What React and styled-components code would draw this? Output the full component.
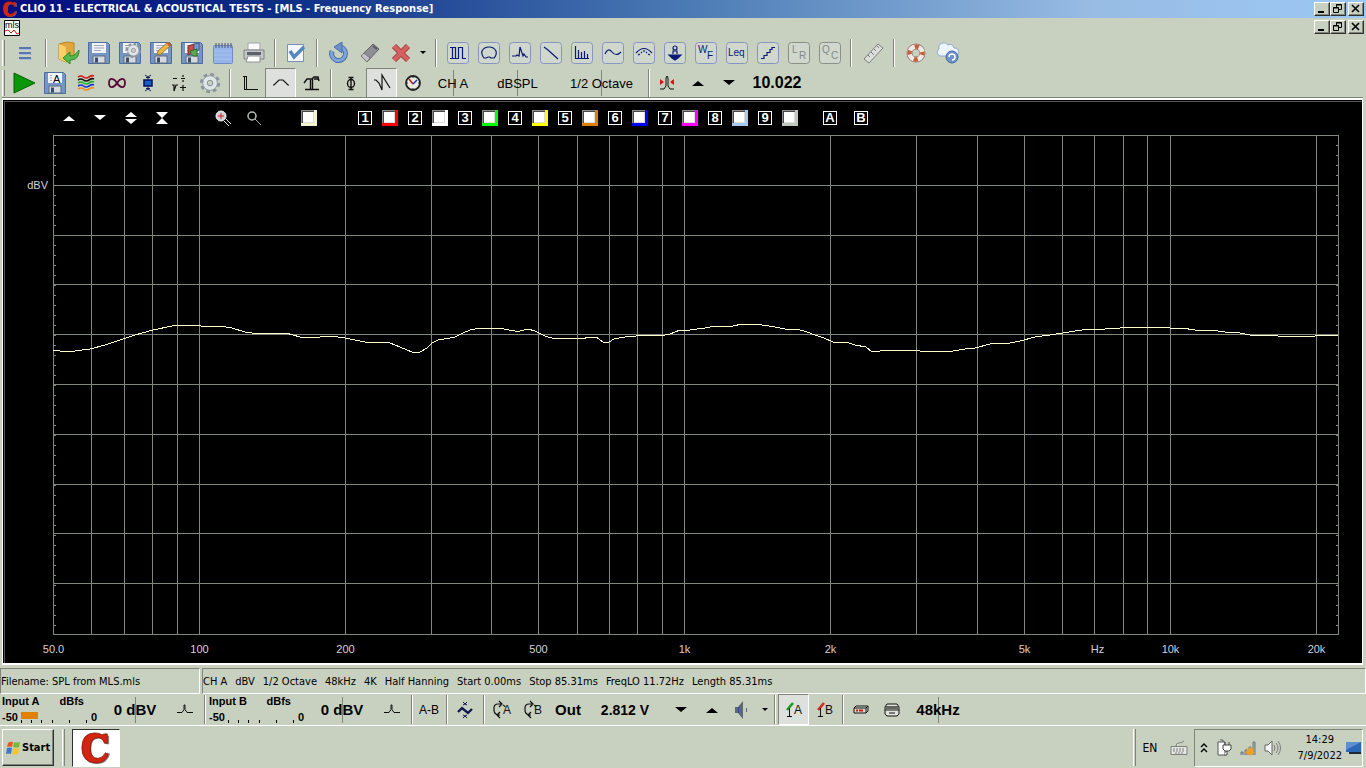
import React from "react";
import styled, { createGlobalStyle, css } from "styled-components";

const face = "#c8d1c0";
const shade = "#80857c";
const navy = "#0a1a78";

const GlobalStyle = createGlobalStyle`
  * {
    box-sizing: border-box;
  }
  body {
    margin: 0;
    background: ${face};
    color: #000;
    font-family: "DejaVu Sans Condensed", "Noto Sans", sans-serif;
    font-size: 11px;
  }
  button {
    font: inherit;
    color: inherit;
    padding: 0;
    margin: 0;
    border: 0;
    background: transparent;
  }
  svg {
    display: block;
    flex: none;
  }
`;

const Window = styled.div`
  display: flex;
  flex-direction: column;
  min-height: 100vh;
`;

const TitleBar = styled.header`
  display: flex;
  align-items: center;
  height: 18px;
  padding: 0 2px;
  background: linear-gradient(90deg, #020c80 0%, #0c2c86 20%, #4a7ab4 50%, #98bce4 80%, #9cc8f4 100%);
`;

const Title = styled.h1`
  flex: 1;
  margin: 0 0 0 2px;
  font-size: 11px;
  line-height: 18px;
  font-weight: 700;
  color: #fff;
  white-space: nowrap;
`;

const MenuBar = styled.div`
  display: flex;
  align-items: flex-start;
  justify-content: space-between;
  height: 20px;
  padding: 2px 2px 0 4px;
`;

const WindowButtons = styled.div`
  display: flex;
  button:last-child {
    margin-left: 2px;
  }
`;

const raised = css`
  border: 1px solid;
  border-color: #fff #303030 #303030 #fff;
  box-shadow: inset -1px -1px 0 ${shade};
`;

const WindowButton = styled.button`
  ${raised}
  width: 16px;
  height: 14px;
  background: ${face};
  display: flex;
  align-items: center;
  justify-content: center;
`;

const Toolbar = styled.div`
  display: flex;
  align-items: stretch;
  height: 30px;
`;

const Grip = styled.span`
  width: ${props => props.$width || 8}px;
  margin: 2px 0;
  background: linear-gradient(90deg, #fff 1px, ${face} 1px 2px, ${shade} 2px 3px, transparent 3px) 2px 0 no-repeat;
`;

const Separator = styled.span`
  width: ${props => props.$width || 12}px;
  margin: 1px 0;
  background: linear-gradient(90deg, ${shade} 1px, #fff 1px 2px) center / 2px 100% no-repeat;
`;

const ToolButton = styled.button`
  width: ${props => props.$width || 31}px;
  display: flex;
  align-items: center;
  justify-content: center;
  ${props =>
    props.$pressed &&
    css`
      border: 1px solid;
      border-color: ${shade} #fff #fff ${shade};
      background: #dde0dc;
    `}
`;

const ValueButton = styled(ToolButton)`
  font-family: "Liberation Sans", sans-serif;
  font-size: ${props => props.$size || 13}px;
  font-weight: ${props => (props.$bold ? 700 : 400)};
  white-space: nowrap;
  ${props =>
    props.$divided &&
    css`
      background: linear-gradient(${shade}, ${shade}) center / 1px 26px no-repeat;
    `}
`;

const Frame = styled.main`
  flex: 1;
  display: flex;
  flex-direction: column;
  margin: 0 3px 0 2px;
  border: solid;
  border-width: 2px 1px 2px 1px;
  border-color: #fff;
  background: #000;
  box-shadow: inset 1px 1px 0 #000, inset 2px 2px 0 #555, 0 -1px 0 ${shade};
`;

const ChartTools = styled.div`
  display: flex;
  align-items: center;
  height: 35px;
  padding-left: 50px;
`;

const ChartButton = styled.button`
  width: 31px;
  height: 20px;
  color: #fff;
  display: flex;
  align-items: center;
  justify-content: center;
`;

const ZoomTools = styled.div`
  display: flex;
  margin: 0 32px 0 30px;
`;

const BoxButton = styled.button`
  width: 14px;
  height: 14px;
  border: 1px solid #fff;
  color: #fff;
  font: 700 13px/12px "Liberation Sans", sans-serif;
  text-align: center;
`;

const CurveCheck = styled.input`
  appearance: none;
  width: 16px;
  height: 16px;
  margin: 0;
  border: solid ${props => props.$color};
  border-width: 0 3px 3px 0;
  background: #fff;
  box-shadow: inset 1px 1px 0 #8c8c8c, inset 2px 2px 0 #484848, inset -1px -1px 0 #dcdcd8;
`;

const Traces = styled.div`
  display: flex;
  margin-left: 41px;
`;

const Trace = styled.div`
  display: flex;
  align-items: center;
  width: 50px;
  gap: 10px;
`;

const Overlays = styled.div`
  display: flex;
  gap: 17px;
  margin-left: 15px;
`;

const PlotArea = styled.div`
  flex: 1;
  display: grid;
  grid-template-columns: 50px 1fr 23px;
  grid-template-rows: 1fr 28px;
`;

const YAxis = styled.div`
  display: flex;
  flex-direction: column;
  padding-right: 5px;
  color: #d8d0d8;
  font: 11px/14px "Liberation Sans", sans-serif;
  text-align: right;
  &::before {
    content: "";
    flex: 0 0 calc(10% - 7px);
  }
`;

const Plot = styled.svg`
  width: 100%;
  height: 100%;
  min-height: 0;
`;

const PlotCell = styled.div`
  display: grid;
  min-height: 0;
  height: 100%;
`;

const XAxis = styled.svg`
  grid-column: 2;
  width: 100%;
  height: 28px;
  overflow: visible;
  fill: #d8d0d8;
  font: 11px "Liberation Sans", sans-serif;
  text-anchor: middle;
`;

const StatusBar = styled.div`
  display: flex;
  gap: 2px;
  height: 26px;
  margin-top: 3px;
`;

const StatusPanel = styled.div`
  display: flex;
  align-items: center;
  gap: 8px;
  width: ${props => props.$width || "auto"};
  flex: ${props => (props.$width ? "none" : 1)};
  border: 1px solid;
  border-color: ${shade} #fff #fff ${shade};
  white-space: nowrap;
`;

const MeterBar = styled.div`
  display: flex;
  height: 32px;
  border-bottom: 1px solid #fff;
`;

const Meter = styled.div`
  display: flex;
  width: 202px;
`;

const MeterInfo = styled.div`
  width: 102px;
  padding-left: 2px;
  font: 700 11px/14px "Liberation Sans", sans-serif;
`;

const MeterHead = styled.div`
  display: flex;
  justify-content: space-between;
  width: 82px;
`;

const MeterScale = styled.div`
  display: flex;
  align-items: center;
  gap: 2px;
  height: 18px;
`;

const Taskbar = styled.footer`
  display: flex;
  align-items: center;
  height: 42px;
  padding: 0 3px 0 2px;
  border-top: 1px solid ${face};
`;

const StartButton = styled.button`
  ${raised}
  display: flex;
  align-items: center;
  gap: 1px;
  width: 52px;
  height: 37px;
  padding-left: 2px;
  font-weight: 700;
`;

const TaskGrip = styled(Grip)`
  align-self: stretch;
  margin-left: ${props => props.$left};
`;

const TaskButton = styled.button`
  width: 48px;
  height: 38px;
  margin-left: 4px;
  border: 1px solid;
  border-color: #303030 #fff #fff #303030;
  background: #fff;
  display: flex;
  align-items: center;
  justify-content: center;
`;

const Language = styled.button`
  width: 22px;
  margin-right: 9px;
  font-size: 12px;
`;

const Tray = styled.div`
  display: flex;
  align-items: center;
  gap: 8px;
  width: 169px;
  height: 38px;
  margin-left: 6px;
  padding-left: 5px;
  border: 1px solid;
  border-color: ${shade} #fff #fff ${shade};
`;

const Clock = styled.time`
  flex: 1;
  line-height: 16px;
  text-align: right;
  margin-right: -4px;
  span {
    display: block;
    padding-right: 8px;
  }
`;

/* ---------- icons ---------- */

const Svg = ({ w = 20, h = 20, children, ...rest }) => (
  <svg width={w} height={h} viewBox={`0 0 ${w} ${h}`} fill="none" aria-hidden="true" {...rest}>
    {children}
  </svg>
);

const Tile = ({ d, muted, children }) => (
  <Svg w={22} h={22} stroke={muted ? "#85898a" : navy} strokeWidth="1.2">
    <rect x="0.5" y="0.5" width="21" height="21" rx="3" stroke={muted ? "#8a8f88" : "#8795c0"} strokeWidth="1" fill="#d0d7cc" />
    {d && <path d={d} />}
    {children}
  </Svg>
);

const tileText = {
  stroke: "none",
  fontFamily: "Liberation Sans",
  fontSize: 10
};

const Floppy = ({ children }) => (
  <Svg w={24} h={24}>
    <path d="M1.5 1.5h19l2 2v19h-21z" fill="#7595c4" stroke="#4d6c9d" />
    <path d="M5 2h14v10H5z" fill="#f0f2f6" />
    <path d="M7 4.5h10M7 7h10M7 9.5h7" stroke="#a0a6b4" />
    <path d="M6 15h12v7H6z" fill="#d6dade" stroke="#5a6a84" />
    <path d="M8 16.5h3v5H8z" fill="#3b4c66" />
    {children}
  </Svg>
);

const MenuIcon = () => (
  <Svg w={16} h={16} stroke="#5878ac" strokeWidth="2">
    <path d="M2 3h12M2 8h12M2 13h12" />
    <path d="M3 4.5h12M3 9.5h12M3 14.5h12" stroke="#a6bcdc" strokeWidth="1" />
  </Svg>
);

const OpenIcon = () => (
  <Svg w={24} h={24}>
    <path d="M3 3l8-2 7 1v15l-8 4-7-3z" fill="#e0a83c" stroke="#b88424" />
    <path d="M3 3l7 3v15l-7-3z" fill="#f7d06a" />
    <path d="M23 9c0 7-3 10-9 10v4l-7-6 7-6v4c4 0 6-2 9-6z" fill="#55b848" stroke="#2c8a28" />
  </Svg>
);

const Gear = ({ x = 0, y = 0, s = 1 }) => (
  <g transform={`translate(${x} ${y}) scale(${s})`}>
    <circle cx="12" cy="12" r="9.5" stroke="#8a949c" strokeWidth="3" strokeDasharray="4 3.46" />
    <circle cx="12" cy="12" r="8" fill="#e0e5e8" stroke="#8a939b" />
    <circle cx="12" cy="12" r="3" fill={face} stroke="#7e8790" />
  </g>
);

const NotebookIcon = () => (
  <Svg w={22} h={22}>
    <rect x="1.5" y="3.5" width="19" height="18" rx="1" fill="#96b4ea" stroke="#6e8cc4" />
    <path d="M2 9h18M2 13h18M2 17h18" stroke="#a8c2f0" />
    <path d="M4 1v5M7 1v5M10 1v5M13 1v5M16 1v5M19 1v5" stroke="#4a5470" />
  </Svg>
);

const PrinterIcon = () => (
  <Svg w={22} h={22}>
    <path d="M5 1h12v7H5z" fill="#fafafa" stroke="#a0a4a8" />
    <path d="M1 8h20v9H1z" fill="#c4c8cc" stroke="#7c8288" />
    <path d="M4 10h14v3H4z" fill="#5c6268" />
    <path d="M5 14h12v6H3z" fill="#fff" stroke="#8c9094" />
  </Svg>
);

const CheckIcon = () => (
  <Svg w={22} h={22}>
    <path d="M2.5 2.5h16v17h-16z" fill="#f4f6fa" stroke="#7890b8" />
    <path d="M5 9l4 6 10-10" stroke="#5687bd" strokeWidth="3.5" />
  </Svg>
);

const UndoIcon = () => (
  <Svg w={22} h={22}>
    <path d="M4 9a7 7 0 1 0 9-4" stroke="#4870a8" strokeWidth="5" />
    <path d="M4 9a7 7 0 1 0 9-4" stroke="#7fa4d6" strokeWidth="3" />
    <path d="M14 0v11L6 5z" fill="#6b92c8" stroke="#4870a8" />
  </Svg>
);

const EraserIcon = () => (
  <Svg w={22} h={22}>
    <path d="M2 14L14 2l6 5L8 20z" fill="#8e8e98" stroke="#62626c" />
    <path d="M2 14l3-3 6 5-3 4z" fill="#c4c0c8" stroke="#72727c" />
    <path d="M14 4l4 3" stroke="#5c5c66" strokeWidth="2" />
  </Svg>
);

const DeleteIcon = () => (
  <Svg w={20} h={20}>
    <path d="M3 3l14 14M17 3L3 17" stroke="#a83c3c" strokeWidth="6" />
    <path d="M3 3l14 14M17 3L3 17" stroke="#d46060" strokeWidth="4" />
  </Svg>
);

const Triangle = ({ up, small }) => (
  <Svg w={12} h={6}>
    <path d={small ? "M3 1h6L6 4z" : up ? "M0 6h12L6 1z" : "M0 0h12L6 5z"} fill="currentColor" />
  </Svg>
);

const RulerIcon = () => (
  <Svg w={22} h={22}>
    <path d="M2 17L16 2l5 4L7 21z" fill="#dcdfdc" stroke="#7b7f7c" />
    <path d="M6 13l2 2M9 10l3 3M12 7l2 2M15 4l2 2" stroke="#7b7f7c" />
  </Svg>
);

const HelpIcon = () => (
  <Svg w={20} h={20}>
    <circle cx="10" cy="10" r="6.5" stroke="#8c7870" strokeWidth="6" />
    <circle cx="10" cy="10" r="6.5" stroke="#eeeae6" strokeWidth="4.5" />
    <circle cx="10" cy="10" r="6.5" stroke="#c5603c" strokeWidth="4.5" strokeDasharray="4.2 6" strokeDashoffset="2.1" />
  </Svg>
);

const CloudIcon = () => (
  <Svg w={24} h={22}>
    <path d="M5 14a4 4 0 0 1-1-7 5 5 0 0 1 9-4 4 4 0 0 1 6 3 4 4 0 0 1 1 8z" fill="#eef4fc" stroke="#90aad0" />
    <circle cx="17" cy="15" r="6" fill="#6c94ca" stroke="#4468a0" />
    <path d="M14 15a3 3 0 1 1 3 3" stroke="#fff" strokeWidth="1.5" />
  </Svg>
);

const WavesIcon = () => (
  <Svg w={18} h={20} strokeWidth="1.6">
    {["#d01818", "#101010", "#20b020", "#1830e0", "#f0901c"].map((color, i) => (
      <path key={color} d={`M1 ${4 + i * 3}q3-2 5.5 0t5.5 0t5-1`} stroke={color} />
    ))}
  </Svg>
);

const InfinityIcon = () => (
  <Svg w={20} h={20} stroke="#5a0838" strokeWidth="1.8">
    <path d="M10 10C7 5 2 4 2 10s5 5 8 0 8-6 8 0-5 5-8 0z" />
  </Svg>
);

const CenterIcon = () => (
  <Svg w={12} h={20}>
    <path d="M2 7h8v6H2z" fill="#1460c4" stroke="#001060" strokeWidth="1.5" />
    <path d="M3 2l3 2 3-2M4 4.5h4M6 4v3M6 13v3M4 15.5h4M3 18l3-2 3 2" stroke="#102060" />
  </Svg>
);

const MathIcon = () => (
  <Svg w={16} h={18} stroke="#101010" strokeWidth="1.2">
    <path d="M2 4.5h4M10 4.5h4M12 1v2M12 6v2M1 11h2v6l2-6h2M9 13.5h6M12 11v6" />
  </Svg>
);

const StepIcon = () => (
  <Svg stroke="#101010">
    <path d="M3 3.5h3M4.5 3v14M6.5 3v13.5M4 16.5h14" />
  </Svg>
);

const BumpIcon = () => (
  <Svg stroke="#101010" strokeWidth="1.2">
    <path d="M2 12h1l5-5h4l5 5h1" />
  </Svg>
);

const TableIcon = () => (
  <Svg stroke="#101010" strokeWidth="1.4">
    <path d="M2 10l3-4h5l2-2h4l1 4M12 6h4M8.5 7v10M10.5 6v11M3 16.5h14" />
  </Svg>
);

const PhiIcon = () => (
  <Svg w={12} h={20} stroke="#101010" strokeWidth="1.4">
    <path d="M6 4v13M3.5 4.5h5M3.5 16.5h5" />
    <ellipse cx="6" cy="10.5" rx="3.5" ry="4" />
  </Svg>
);

const ImpulseIcon = () => (
  <Svg stroke="#101010" strokeWidth="1.2">
    <path d="M2 7h2l3 3 3 7V2l3 5 5 8" />
  </Svg>
);

const ClockIcon = () => (
  <Svg>
    <circle cx="10" cy="10" r="7" fill="#e8ece0" stroke="#222" strokeWidth="1.8" />
    <path d="M10 3v2M10 15v2M3 10h2M15 10h2M5 5l1 1M15 15l-1-1M5 15l1-1" stroke="#222" />
    <path d="M10 11l4-4" stroke="#1030c0" strokeWidth="1.5" />
    <path d="M10 11L6 6" stroke="#c01818" strokeWidth="1.5" />
  </Svg>
);

const CursorIcon = () => (
  <Svg w={18} h={18} stroke="#101010">
    <path d="M2 15h4l2-3V4l1-2 1 2v8l2 3h4" />
    <path d="M2 5v6l4-3zM16 5v6l-4-3z" fill="#e01010" stroke="none" />
  </Svg>
);

const PeakIcon = () => (
  <Svg w={16} h={14} stroke="#101010">
    <path d="M0 9.5h5l2-3V2h1v4.5l2 3h6" />
  </Svg>
);

const WaveIcon = () => (
  <Svg w={16} h={20} stroke="#101850">
    <path d="M1 12l4-4 6 5 4-4" strokeWidth="2.4" />
    <path d="M6 2l2 2 2-2M6 5l2-1 2 1M6 18l2-2 2 2M6 15l2 1 2-1" />
  </Svg>
);

const LoopIcon = ({ letter }) => (
  <Svg w={20} h={20}>
    <path d="M9 4H6Q2 4 2 8v2q0 4 4 5h2M7 1l3 3-3 3M8 12l-3 3 3 3M11 5q2 1 2 2" stroke="#101010" strokeWidth="1.2" />
    <text x="11" y="14" fill="#101010" fontFamily="Liberation Sans" fontSize="12">{letter}</text>
  </Svg>
);

const SpeakerIcon = () => (
  <Svg w={14} h={20}>
    <path d="M1 7h3l5-6v18l-5-6H1z" fill="#5c6876" />
    <path d="M4.5 7v6" stroke="#3048a0" />
    <path d="M12.5 8v4" stroke="#5c6876" />
  </Svg>
);

const MicIcon = ({ letter, color }) => (
  <Svg w={18} h={20}>
    <path d="M2 10l6-7" stroke={color} strokeWidth="2.6" />
    <path d="M4.5 8v9M2 16.5h5" stroke="#101010" />
    <text x="9" y="14" fill="#101010" fontFamily="Liberation Sans" fontSize="12">{letter}</text>
  </Svg>
);

const RackIcon = () => (
  <Svg w={16} h={12}>
    <path d="M1 4l2-2h12v5l-2 2H1z" fill="#d8dcd0" stroke="#101010" />
    <path d="M1 4h12v5M13 4l2-2" stroke="#101010" />
    <path d="M3 5.5h2v2H3zM6 5.5h4v2H6z" fill="#e01010" />
  </Svg>
);

const DiskIcon = () => (
  <Svg w={16} h={16}>
    <path d="M3 2h10l2 3v7l-2 2H3l-2-2V5z" fill="#e0e4dc" stroke="#101010" />
    <path d="M2 4h12v3H2z" fill="#60665c" />
    <path d="M1 8h14M5 11h6" stroke="#101010" />
  </Svg>
);

const Logo = ({ size }) => (
  <svg width={size} height={size} viewBox="0 0 34 34" fill="none" aria-hidden="true">
    <path d="M31 4v9h-3q-2-6-8-6-8 0-8 11t8 11q5 0 9-7l3 1q-3 11-14 11Q4 34 4 19 4 3 18 3q5 0 7 2l3-1z" fill="#888" />
    <path d="M29 2v10h-3q-2-6-7-6-8 0-8 11t8 11q5 0 8-6l3 2q-3 9-13 9Q2 32 2 17 2 1 16 1q5 0 7 2l3-1z" fill="#d42410" stroke="#7a1408" strokeWidth="0.8" />
  </svg>
);

const MlsIcon = () => (
  <Svg w={16} h={16}>
    <path d="M.5.5h15v15H.5z" fill="#fff" stroke="#000" />
    <text x="1" y="8" fill="#000" fontFamily="Liberation Sans" fontSize="9">mls</text>
    <path d="M1 11l3-1 3 3 3-3 3 4 2-1" stroke="#e01010" />
  </Svg>
);

const WindowsFlag = () => (
  <Svg w={16} h={16}>
    <path d="M3 3q2-2 5-1L7 7q-3-1-5 0z" fill="#e05a28" />
    <path d="M9 2q3 1 6 0l-1 5q-3 1-6 0z" fill="#78b83c" />
    <path d="M2 8q2-1 5 0l-1 6q-3-1-5 0z" fill="#3c78d0" />
    <path d="M8 8q3 1 6 0l-1 6q-3 1-6 0z" fill="#f4c430" />
  </Svg>
);

/* ---------- data ---------- */

const fileTools = [
  ["Open", <OpenIcon />],
  ["Save", <Floppy />],
  ["Save settings", <Floppy><Gear x={7} y={1} s={0.7} /></Floppy>],
  ["Save and edit", <Floppy><path d="M8 14l1-4L19 1l3 3-10 9z" fill="#e8b848" stroke="#a07828" /><path d="M19 1l3 3-2 1-2-2z" fill="#d05040" /></Floppy>],
  ["Export graphics", <Floppy><path d="M8 5l6-2v8l-6 3z" fill="#c84c40" stroke="#803028" /><path d="M14 3l5-1v7l-5 3z" fill="#7898c8" stroke="#405888" /><path d="M10 10l7-2v7q-6 1-7-5z" fill="#5ca850" stroke="#386830" /></Floppy>],
  ["Notes", <NotebookIcon />],
  ["Print", <PrinterIcon />]
];

const tests = [
  ["MLS", <Tile d="M3 5.5h5M5.5 5v11.5M8.5 5v11.5H3M11.5 16.5V5.5h4v11H19M8 16.5h4" />],
  ["Polar", <Tile d="M8 16h-2q-3-4-2-7 2-4 7-4t7 4q1 4-2 7h-3q-2-2-5 0z" />],
  ["Sweep", <Tile d="M3 14h4l1-1 2 1 1-9 3 9 1-2 2 3h2" />],
  ["Decay", <Tile d="M4 5l4 3 10 9" />],
  ["FFT", <Tile d="M4.5 4v12.5H18M7.5 8v8M10.5 10v6M13.5 9v7M16.5 12v4" />],
  ["Scope", <Tile d="M3 12q3-7 7-2t9 0" />],
  ["Meter", <Tile d="M3 11q8-9 16 0M5 13l2-1M8 10l1 1M11 8v2M14 10l-1 1M17 13l-2-1" />],
  ["Thiele Small", <Tile><circle cx="11" cy="6" r="2" /><path d="M9 12V9h4v3" /><path d="M5 13h12l-3 3-3 2-3-2z" fill={navy} /></Tile>],
  ["Wow and flutter", <Tile><text x="3" y="11" fill={navy} {...tileText}>W</text><text x="12" y="17" fill={navy} {...tileText}>F</text></Tile>],
  ["Leq", <Tile><text x="2" y="14" fill={navy} {...tileText}>Leq</text></Tile>],
  ["Linearity", <Tile d="M4 16.5h3v-3h3v-3h3v-3h2v-2h3" />],
  ["Loudspeaker rub", <Tile muted><text x="4" y="11" fill="#85898a" {...tileText}>L</text><text x="11" y="17" fill="#85898a" {...tileText}>R</text></Tile>],
  ["Quality control", <Tile muted><text x="3" y="11" fill="#85898a" {...tileText}>Q</text><text x="12" y="17" fill="#85898a" {...tileText}>C</text></Tile>]
];

const traces = [
  "#ff0000",
  "#ffffff",
  "#00ff00",
  "#ffff00",
  "#e08000",
  "#0000ff",
  "#ff00ff",
  "#a6caf0",
  "#c0c8c0"
];

const statusItems = [
  "CH A",
  "dBV",
  "1/2 Octave",
  "48kHz",
  "4K",
  "Half Hanning",
  "Start 0.00ms",
  "Stop 85.31ms",
  "FreqLO 11.72Hz",
  "Length 85.31ms"
];

const PLOT_W = 1286;
const PLOT_H = 500;
const OCTAVE = 146.1;

const freqX = f => Math.floor(Math.log2(f / 50) * OCTAVE + 0.4) + 0.5;

const gridFreqs = [
  60, 70, 80, 90, 100, 200, 300, 400, 500, 600, 700, 800, 900, 1000, 2000,
  3000, 4000, 5000, 6000, 7000, 8000, 9000, 10000, 20000
];

const freqLabels = [
  [50, "50.0"],
  [100, "100"],
  [200, "200"],
  [500, "500"],
  [1000, "1k"],
  [2000, "2k"],
  [5000, "5k"],
  [7070, "Hz"],
  [10000, "10k"],
  [20000, "20k"]
];

// response curve, in plot units from the upper left corner
const response =
  "0,215 7,216 22,216 37,214 52,210 70,204 82,200 100,195 119,191 127,190 145,190 148,191 167,191 179,193 192,197 199,198 233,198 247,202 267,202 277,201 292,203 312,207 337,208 347,212 359,217 367,217 374,213 379,208 385,205 397,203 402,202 410,198 417,195 427,193 445,193 462,196 467,196 475,194 482,196 492,201 502,204 517,203 528,204 537,202 543,202 550,207 556,207 561,204 572,202 595,200 607,201 617,199 627,195 637,195 652,193 662,191 680,191 689,189 709,190 722,192 737,195 744,194 754,197 762,200 771,203 780,207 793,207 802,210 813,212 819,217 827,216 839,215 847,216 857,215 867,216 885,217 892,216 900,216 912,214 922,213 937,209 957,208 967,206 982,202 997,200 1010,198 1022,196 1037,194 1052,194 1067,193 1082,192 1107,192 1117,193 1129,193 1142,195 1157,195 1172,197 1187,198 1197,200 1225,201 1262,201 1269,200 1285,201";

const tickLevels = Array.from({ length: 49 }, (_, i) => (i + 1) * 10 + 0.5);

const Controls = () => (
  <WindowButtons>
    <WindowButton aria-label="Minimize">
      <Svg w={10} h={10}><path d="M1 8h6" stroke="#000" strokeWidth="2" /></Svg>
    </WindowButton>
    <WindowButton aria-label="Restore">
      <Svg w={10} h={10} stroke="#000">
        <path d="M3.5 3V.5h5v5H6M3 1h6M.5 3.5h5v5h-5zM0 4h6" />
      </Svg>
    </WindowButton>
    <WindowButton aria-label="Close">
      <Svg w={10} h={10}><path d="M1 1l7 7M8 1L1 8" stroke="#000" strokeWidth="1.6" /></Svg>
    </WindowButton>
  </WindowButtons>
);

const Chart = () => (
  <PlotArea>
    <YAxis>dBV</YAxis>
    <PlotCell>
      <Plot viewBox={`0 0 ${PLOT_W} ${PLOT_H}`} preserveAspectRatio="none" role="img" aria-label="Frequency response">
        <g stroke="#80887e" fill="none" shapeRendering="crispEdges">
          {gridFreqs.map(f => (
            <path key={f} d={`M${freqX(f)} 0V${PLOT_H}`} />
          ))}
          {[1, 2, 3, 4, 5, 6, 7, 8, 9].map(i => (
            <path key={i} d={`M0 ${Math.round(i * 49.8) + 0.5}H${PLOT_W}`} />
          ))}
          <rect x="0.5" y="0.5" width={PLOT_W - 1} height={PLOT_H - 1} />
          {tickLevels.map(y => (
            <path key={y} d={`M0 ${y}h3M${PLOT_W} ${y}h-3`} />
          ))}
        </g>
        <polyline points={response} fill="none" stroke="#ffffd0" shapeRendering="crispEdges" />
      </Plot>
    </PlotCell>
    <XAxis>
      {freqLabels.map(([f, text]) => (
        <text key={text} x={`${(freqX(f) / PLOT_W) * 100}%`} y="18">
          {text}
        </text>
      ))}
    </XAxis>
  </PlotArea>
);

const InputMeter = ({ name, level }) => (
  <Meter>
    <MeterInfo>
      <MeterHead>
        <span>Input {name}</span>
        <span>dBfs</span>
      </MeterHead>
      <MeterScale>
        <span>-50</span>
        <Svg w={69} h={12}>
          <rect x="1" y="1" width={level} height="7" fill="#e08000" />
          <path d="M1.5 9v3M11.5 9v3M21.5 9v3M32.5 9v3M49.5 9v3M66.5 9v3" stroke="#000" />
        </Svg>
        <span>0</span>
      </MeterScale>
    </MeterInfo>
    <ValueButton $width={66} $size={15} $bold $divided>0 dBV</ValueButton>
    <ToolButton $width={34} aria-label={`Input ${name} peak`}><PeakIcon /></ToolButton>
  </Meter>
);

const App = () => (
  <>
    <GlobalStyle />
    <Window>
      <TitleBar>
        <Logo size={16} />
        <Title>CLIO 11 - ELECTRICAL &amp; ACOUSTICAL TESTS - [MLS - Frequency Response]</Title>
        <Controls />
      </TitleBar>
      <MenuBar>
        <MlsIcon />
        <Controls />
      </MenuBar>

      <Toolbar>
        <Grip $width={10} />
        <ToolButton $width={30} aria-label="Menu"><MenuIcon /></ToolButton>
        <Separator />
        {fileTools.map(([name, icon]) => (
          <ToolButton key={name} aria-label={name}>{icon}</ToolButton>
        ))}
        <Separator $width={11} />
        <ToolButton aria-label="Options"><CheckIcon /></ToolButton>
        <Separator />
        <ToolButton aria-label="Undo"><UndoIcon /></ToolButton>
        <ToolButton aria-label="Erase"><EraserIcon /></ToolButton>
        <ToolButton aria-label="Delete"><DeleteIcon /></ToolButton>
        <ToolButton $width={14} aria-label="Delete options"><Triangle small /></ToolButton>
        <Separator />
        {tests.map(([name, icon]) => (
          <ToolButton key={name} aria-label={name}>{icon}</ToolButton>
        ))}
        <Separator />
        <ToolButton aria-label="Calibrate"><RulerIcon /></ToolButton>
        <Separator />
        <ToolButton aria-label="Help"><HelpIcon /></ToolButton>
        <ToolButton aria-label="Updates"><CloudIcon /></ToolButton>
      </Toolbar>

      <Toolbar>
        <Grip />
        <ToolButton aria-label="Go">
          <Svg w={24} h={24}><path d="M2 2l21 10L2 22z" fill="#089808" stroke="#056005" /></Svg>
        </ToolButton>
        <ToolButton aria-label="Autosave">
          <Floppy>
            <path d="M9 3h10v9H9z" fill="#f4f6f8" />
            <text x="10" y="12" fill="#000" fontFamily="Liberation Sans" fontSize="11">A</text>
          </Floppy>
        </ToolButton>
        <ToolButton aria-label="Overlays"><WavesIcon /></ToolButton>
        <ToolButton aria-label="Loop"><InfinityIcon /></ToolButton>
        <ToolButton aria-label="Center"><CenterIcon /></ToolButton>
        <ToolButton aria-label="Processing"><MathIcon /></ToolButton>
        <ToolButton aria-label="Settings"><Svg w={22} h={22}><Gear s={0.92} /></Svg></ToolButton>
        <Separator $width={9} />
        <ToolButton aria-label="Time domain"><StepIcon /></ToolButton>
        <ToolButton $pressed aria-label="Frequency domain"><BumpIcon /></ToolButton>
        <ToolButton aria-label="Energy time"><TableIcon /></ToolButton>
        <Separator $width={8} />
        <ToolButton aria-label="Phase"><PhiIcon /></ToolButton>
        <ToolButton $pressed aria-label="Wrapped phase"><ImpulseIcon /></ToolButton>
        <ToolButton aria-label="Group delay"><ClockIcon /></ToolButton>
        <ValueButton $width={50} $divided>CH A</ValueButton>
        <ValueButton $width={79} $divided>dBSPL</ValueButton>
        <ValueButton $width={89} $divided>1/2 Octave</ValueButton>
        <Separator $width={5} />
        <ToolButton aria-label="Marker"><CursorIcon /></ToolButton>
        <ToolButton aria-label="Up"><Triangle up /></ToolButton>
        <ToolButton aria-label="Down"><Triangle /></ToolButton>
        <ValueButton $width={66} $size={16} $bold>10.022</ValueButton>
      </Toolbar>

      <Frame>
        <ChartTools>
          <ChartButton aria-label="Shift up"><Triangle up /></ChartButton>
          <ChartButton aria-label="Shift down"><Triangle /></ChartButton>
          <ChartButton aria-label="Expand">
            <Svg w={12} h={14}><path d="M0 6h12L6 1zM0 8h12l-6 5z" fill="#fff" /></Svg>
          </ChartButton>
          <ChartButton aria-label="Compress">
            <Svg w={12} h={14}><path d="M0 1h12L6 7zM0 13h12L6 7z" fill="#fff" /></Svg>
          </ChartButton>
          <ZoomTools>
            <ChartButton aria-label="Zoom in">
              <Svg w={16} h={16}>
                <circle cx="6" cy="6" r="5" fill="#d0d0dc" stroke="#f4f4f4" />
                <path d="M6 3v6M3 6h6" stroke="#e01010" />
                <path d="M9 11l5 5M11 9l5 5" stroke="#e8e8e8" />
              </Svg>
            </ChartButton>
            <ChartButton aria-label="Zoom out">
              <Svg w={16} h={16}>
                <circle cx="6" cy="6" r="4" stroke="#b8c0b8" strokeWidth="1.5" />
                <path d="M9 9l6 6" stroke="#b0b0b0" />
              </Svg>
            </ChartButton>
          </ZoomTools>
          <CurveCheck type="checkbox" $color="#f4f4cc" aria-label="Current curve" />
          <Traces>
            {traces.map((color, i) => (
              <Trace key={color}>
                <BoxButton>{i + 1}</BoxButton>
                <CurveCheck type="checkbox" $color={color} aria-label={`Overlay ${i + 1}`} />
              </Trace>
            ))}
          </Traces>
          <Overlays>
            <BoxButton>A</BoxButton>
            <BoxButton>B</BoxButton>
          </Overlays>
        </ChartTools>
        <Chart />
      </Frame>

      <StatusBar>
        <StatusPanel $width="200px">Filename: SPL from MLS.mls</StatusPanel>
        <StatusPanel>
          {statusItems.map(item => (
            <span key={item}>{item}</span>
          ))}
        </StatusPanel>
      </StatusBar>

      <MeterBar>
        <InputMeter name="A" level={17} />
        <Separator $width={5} />
        <InputMeter name="B" level={0} />
        <Separator $width={5} />
        <ValueButton $width={30} $size={12}>A-B</ValueButton>
        <Separator $width={5} />
        <ToolButton $width={32} aria-label="Generator"><WaveIcon /></ToolButton>
        <Separator $width={5} />
        <ToolButton aria-label="Loop A"><LoopIcon letter="A" /></ToolButton>
        <ToolButton aria-label="Loop B"><LoopIcon letter="B" /></ToolButton>
        <ValueButton $width={40} $size={15} $bold>Out</ValueButton>
        <ValueButton $width={74} $size={14} $bold>2.812 V</ValueButton>
        <ToolButton $width={38} aria-label="Lower output"><Triangle /></ToolButton>
        <ToolButton $width={24} aria-label="Raise output"><Triangle up /></ToolButton>
        <ToolButton $width={34} aria-label="Output on"><SpeakerIcon /></ToolButton>
        <ToolButton $width={14} aria-label="Output options"><Triangle small /></ToolButton>
        <Separator $width={6} />
        <ToolButton $pressed aria-label="Microphone A"><MicIcon letter="A" color="#18a018" /></ToolButton>
        <ToolButton aria-label="Microphone B"><MicIcon letter="B" color="#d82818" /></ToolButton>
        <Separator $width={5} />
        <ToolButton aria-label="Hardware"><RackIcon /></ToolButton>
        <ToolButton aria-label="Turntable"><DiskIcon /></ToolButton>
        <ValueButton $width={62} $size={15} $bold $divided>48kHz</ValueButton>
      </MeterBar>

      <Taskbar>
        <StartButton><WindowsFlag />Start</StartButton>
        <TaskGrip $left="6px" />
        <TaskButton aria-label="CLIO 11"><Logo size={32} /></TaskButton>
        <TaskGrip $left="auto" />
        <Language>EN</Language>
        <Svg w={18} h={16} stroke="#7c807c">
          <path d="M1 6.5h16v8H1zM6 6q0-3 3-3t5-2" fill="#e4e6e2" />
          <path d="M3 9h12M3 11h12M5 13h8" strokeDasharray="2 1" />
        </Svg>
        <Tray>
          <Svg w={8} h={10} stroke="#000" strokeWidth="1.3"><path d="M1 4l3-3 3 3M1 9l3-3 3 3" /></Svg>
          <Svg w={16} h={18}>
            <path d="M2 3h7v13H2zM4 1h3v2" fill="#fff" stroke="#555" />
            <path d="M9 3v3M13 3v3M7 6h8v4l-2 2H9L7 10zM11 12v4H8" fill="#fff" stroke="#444" />
          </Svg>
          <Svg w={16} h={16}>
            <path d="M1 15v-3h2v3M5 15v-5h2v5M9 15V7h2v8M13 15V2h2v13" fill="#a8b0b8" stroke="#70747c" />
            <path d="M10 6l1 3 3-1-1 3 2 2-3 1-2 2-2-2-3-1 2-2-1-3 3 1z" fill="#f0a020" />
          </Svg>
          <Svg w={18} h={16}>
            <path d="M1 5h3l4-4v14l-4-4H1z" fill="#f4f4f4" stroke="#666" />
            <path d="M10 5q2 3 0 6M12 3q4 5 0 10M14 1q5 7 0 14" stroke="#7c7c7c" />
          </Svg>
          <Clock>
            <span>14:29</span>
            7/9/2022
          </Clock>
          <Svg w={16} h={14}>
            <path d="M0 1h15v10H0z" fill="#2c68b4" />
            <path d="M0 1h15L0 9z" fill="#5a90d0" />
            <path d="M3 12h12" stroke="#202838" strokeWidth="2" />
          </Svg>
        </Tray>
      </Taskbar>
    </Window>
  </>
);

export default App;
